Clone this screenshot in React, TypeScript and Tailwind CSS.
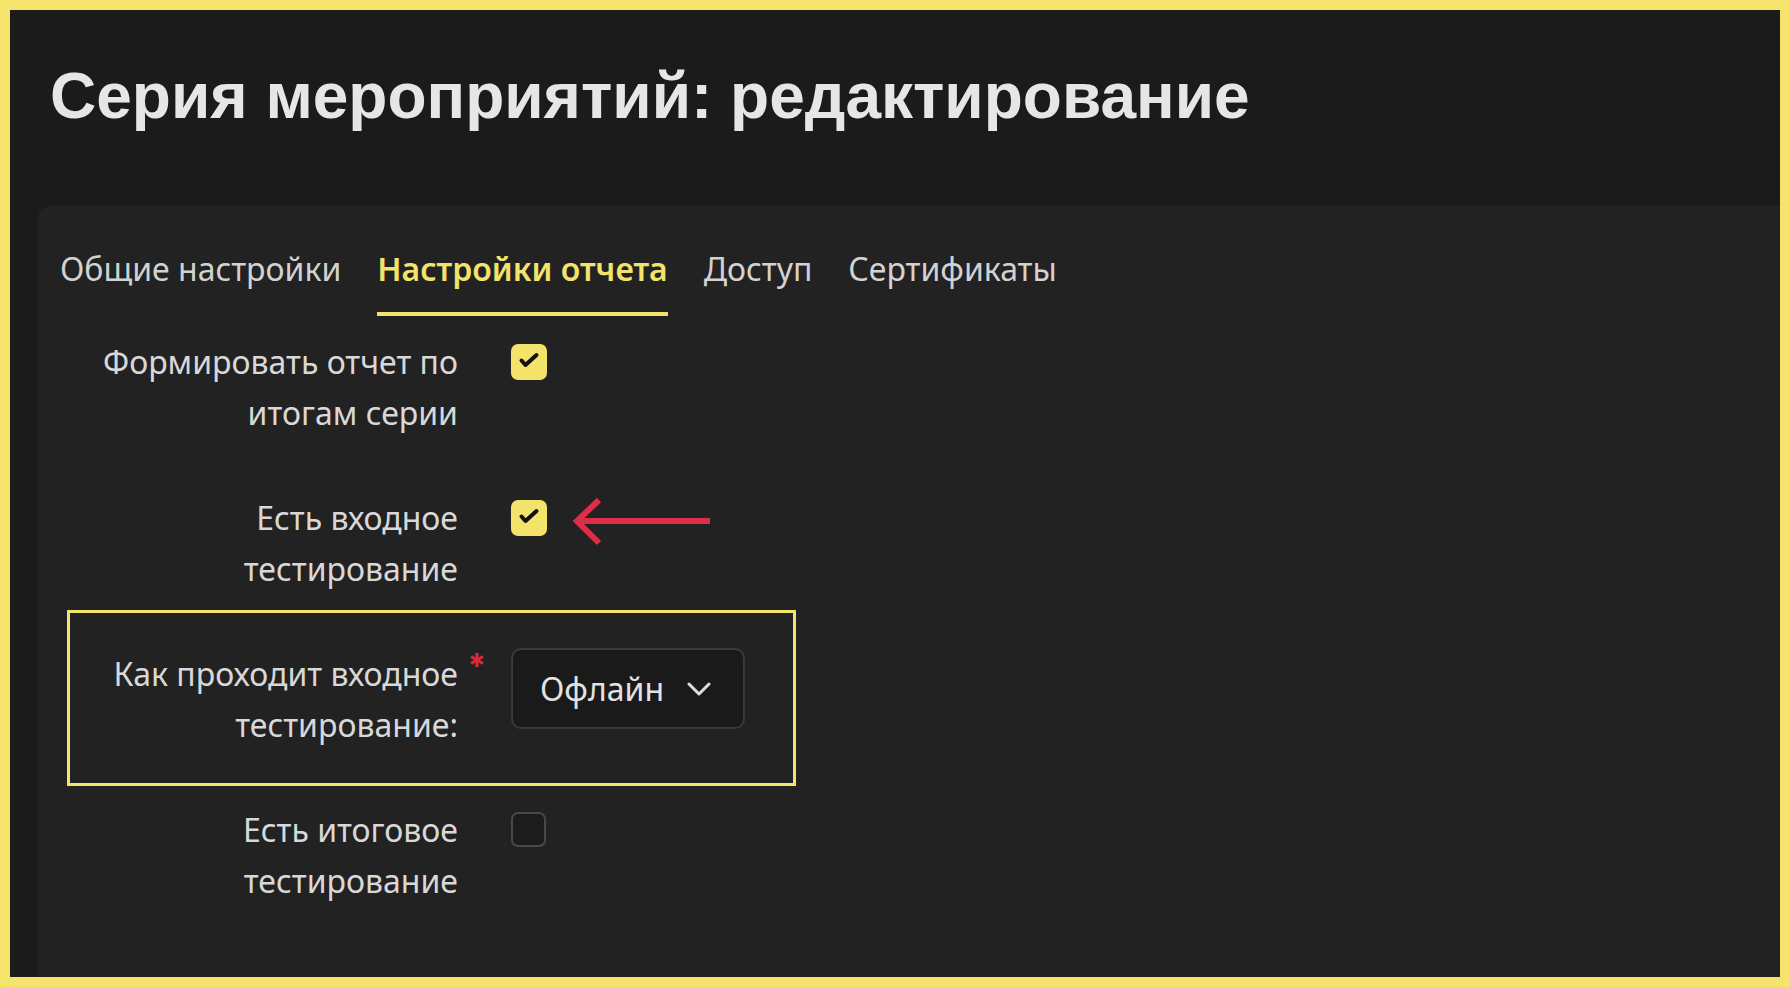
import React from 'react';

const tabs = ['Общие настройки', 'Настройки отчета', 'Доступ', 'Сертификаты'];

function Check({ checked }: { checked: boolean }) {
  if (!checked) {
    return <div className="h-[35px] w-[35px] shrink-0 rounded-[7px] border-2 border-[#484848] bg-[#1c1c1c]" />;
  }
  return (
    <div className="flex h-[36px] w-[36px] shrink-0 items-center justify-center rounded-[7px] bg-[#f3e36b]">
      <svg width="36" height="36" viewBox="0 0 36 36">
        <path d="M10.5 16.5 L14.5 21 L25.5 11" fill="none" stroke="#111" strokeWidth="4" strokeLinecap="round" strokeLinejoin="round" />
      </svg>
    </div>
  );
}

function Row({ label, children, extra }: { label: React.ReactNode; children: React.ReactNode; extra?: React.ReactNode }) {
  return (
    <div className="relative flex gap-[53px]">
      <div className="relative w-[398px] shrink-0 text-right text-[32px] leading-[51px] text-[#d8d8d8]">{label}</div>
      <div className="pt-[8px]">{children}</div>
      {extra}
    </div>
  );
}

export default function App() {
  return (
    <div className="h-[987px] w-[1790px] bg-[#f4e46c] p-[10px] font-['Noto_Sans',sans-serif]">
      <div className="flex h-full flex-col overflow-hidden bg-[#1b1b1b]">
        <h1 className="pl-[40px] pt-[54px] font-['Liberation_Sans',Arial,sans-serif] text-[64px] font-bold leading-[64px] text-[#e6e6e6]">
          Серия мероприятий: редактирование
        </h1>

        <div className="ml-[28px] mt-[78px] flex-1 rounded-tl-[12px] bg-[#222222] px-[22px] pt-[37px]">
          {/* Tabs */}
          <div className="flex gap-[36px]">
            {tabs.map((t, i) => (
              <div
                key={t}
                className={`border-b-4 pb-[18px] text-[32px] leading-[51px] ${
                  i === 1 ? 'border-[#f3e36b] font-semibold text-[#f3e36b]' : 'border-transparent text-[#d2d2d2]'
                }`}
              >
                {t}
              </div>
            ))}
          </div>

          {/* Form */}
          <div className="mt-[20px] flex flex-col gap-[54px]">
            <Row label={<>Формировать отчет по<br />итогам серии</>}>
              <Check checked />
            </Row>

            <Row
              label={<>Есть входное<br />тестирование</>}
              extra={
                <svg className="absolute left-[510px] top-[6px]" width="144" height="50" viewBox="0 0 144 50">
                  <path d="M140 23 H6" stroke="#dc2f46" strokeWidth="6" />
                  <path d="M29 2 L7 23 L29 45" fill="none" stroke="#dc2f46" strokeWidth="6" />
                </svg>
              }
            >
              <Check checked />
            </Row>

            <div className="relative">
              <div className="pointer-events-none absolute left-[7px] top-[-38px] h-[176px] w-[729px] border-[3px] border-[#f4e46c]" />
              <div className="flex gap-[53px]">
                <div className="relative w-[398px] shrink-0 text-right text-[32px] leading-[51px] text-[#d8d8d8]">
                  Как проходит входное
                  <br />
                  тестирование:
                  <svg className="absolute right-[-27px] top-[4px]" width="16" height="16" viewBox="0 0 16 16">
                    <g stroke="#e0283c" strokeWidth="3">
                      <path d="M8 1 V15" />
                      <path d="M2 4.5 L14 11.5" />
                      <path d="M2 11.5 L14 4.5" />
                    </g>
                  </svg>
                </div>
                <div className="flex h-[81px] w-[234px] items-center justify-between rounded-[10px] border-2 border-[#3a3a3a] bg-[#1a1a1a] pl-[27px] pr-[32px] text-[32px] text-[#e2e2e2]">
                  <span>Офлайн</span>
                  <svg width="24" height="14" viewBox="0 0 24 14">
                    <path d="M2 2 L12 12 L22 2" fill="none" stroke="#dedede" strokeWidth="3" strokeLinecap="round" strokeLinejoin="round" />
                  </svg>
                </div>
              </div>
            </div>

            <Row label={<>Есть итоговое<br />тестирование</>}>
              <Check checked={false} />
            </Row>
          </div>
        </div>
      </div>
    </div>
  );
}
